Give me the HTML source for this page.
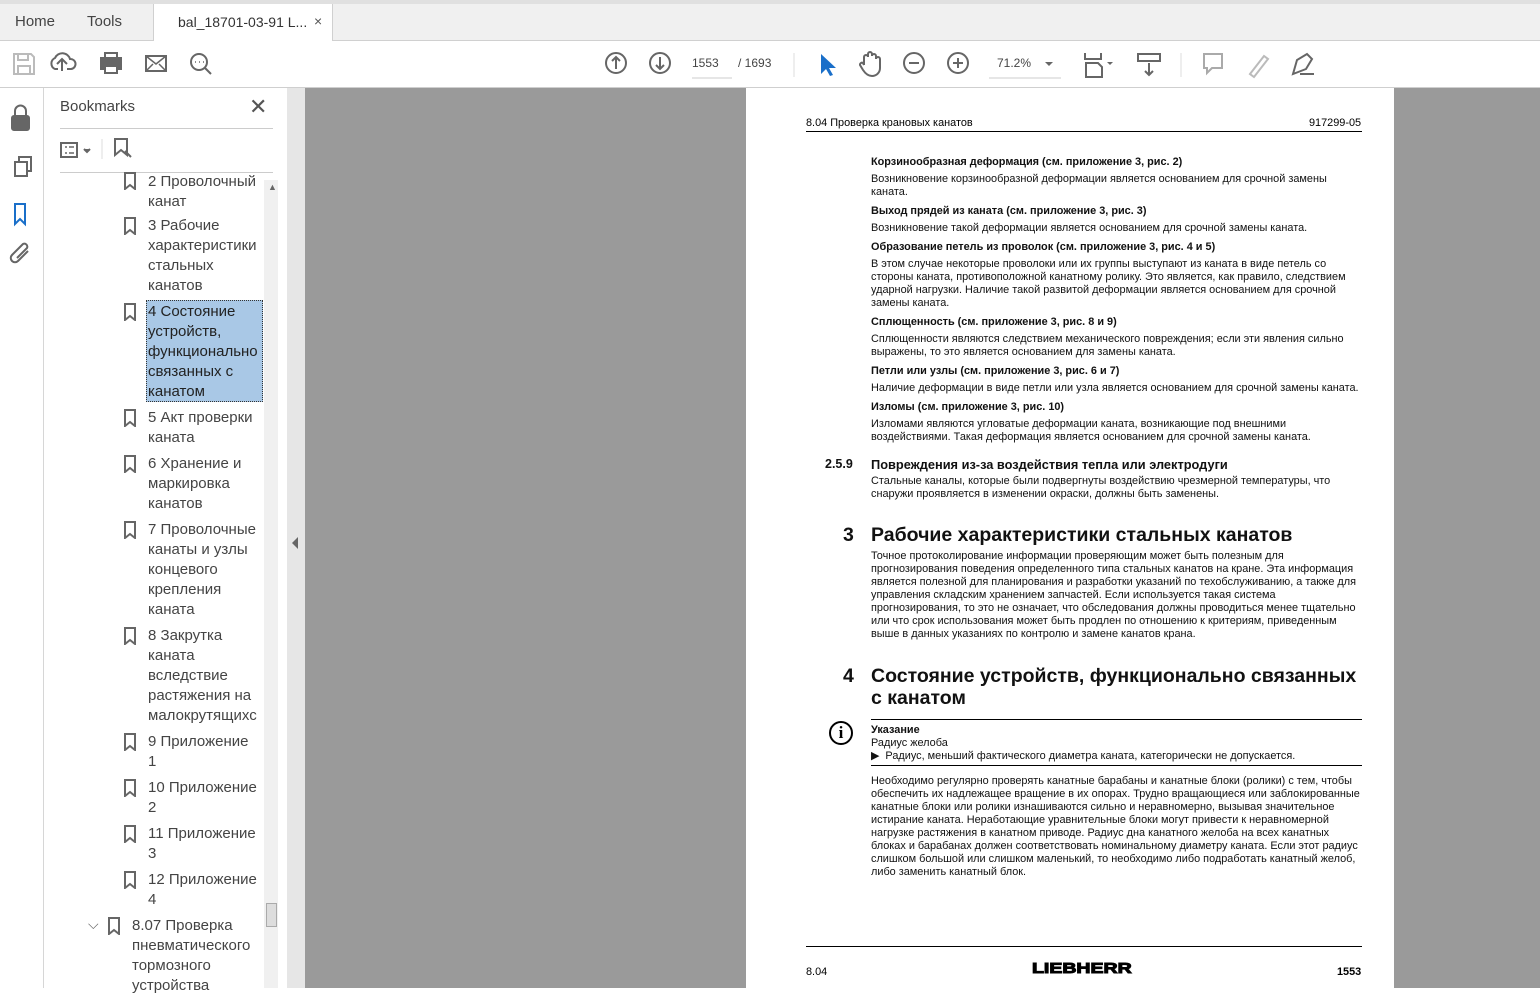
<!DOCTYPE html>
<html><head><meta charset="utf-8"><style>
*{margin:0;padding:0;box-sizing:border-box}
body{width:1540px;height:988px;overflow:hidden;font-family:"Liberation Sans",sans-serif;background:#fff;position:relative}
.a{position:absolute}
.tabs{left:0;top:0;width:1540px;height:41px;background:#f0f0f0;border-top:4px solid #e0e0e0;border-bottom:1px solid #d0d0d0}
.tb{left:0;top:41px;width:1540px;height:47px;background:#fff;border-bottom:1px solid #cfcfcf}
.strip{left:0;top:88px;width:44px;height:900px;background:#fff;border-right:1px solid #d6d6d6}
.bm{left:44px;top:88px;width:243px;height:900px;background:#fff}
.gut{left:287px;top:88px;width:18px;height:900px;background:#e6e6e6}
.doc{left:305px;top:88px;width:1235px;height:900px;background:#9a9a9a}
.page{left:746px;top:88px;width:648px;height:900px;background:#fff}
.it{position:absolute;left:148px;font-size:15px;line-height:20px;color:#444;width:111px}
.bi{position:absolute;left:123px;width:14px;height:18px}
.p{position:absolute;font-size:10.9px;line-height:13px;color:#111;left:871px;width:500px}
.b{font-weight:bold}
.h{font-size:19.5px;line-height:22px}
</style></head><body>
<div class="a tabs"></div>
<div class="a" style="left:15px;top:13px;font-size:15px;color:#444">Home</div>
<div class="a" style="left:87px;top:13px;font-size:15px;color:#444">Tools</div>
<div class="a" style="left:153px;top:4px;width:180px;height:38px;background:#fff;border-left:1px solid #d0d0d0;border-right:1px solid #d0d0d0"></div>
<div class="a" style="left:178px;top:14px;font-size:14px;color:#333">bal_18701-03-91 L...</div>
<div class="a" style="left:314px;top:13px;font-size:14px;color:#555">×</div>
<div class="a tb"></div>
<svg class="a" style="left:0;top:41px" width="1540" height="47" fill="none" stroke="#666" stroke-width="2">
<path d="M14 13h17l3 3v17h-20z M18 13v6h10v-6 M18 33v-8h12v8" stroke="#bbb"/>
<path d="M62 30v-12m-5 5l5-5 5 5M58 28h-3a6 6 0 010-11 8 8 0 0115 1 5 5 0 011 10h-4"/>
<rect x="101" y="17" width="20" height="11" fill="#666"/><rect x="105" y="12" width="12" height="5"/><rect x="105" y="25" width="12" height="7" fill="#fff"/>
<rect x="146" y="15" width="20" height="15"/><path d="M146 15l10 8 10-8M146 30l7-7M166 30l-7-7" stroke-width="1.5"/>
<circle cx="199" cy="21" r="8"/><path d="M205 27l6 6"/><path d="M195 21h1M199 21h1M203 21h1" stroke-width="1.5"/>
<circle cx="616" cy="22" r="10"/><path d="M616 28v-12m-4 4l4-4 4 4"/>
<circle cx="660" cy="22" r="10"/><path d="M660 16v12m-4-4l4 4 4-4"/>
<path d="M692 37h40" stroke="#ccc" stroke-width="1"/>
<path d="M794 12v24M1181 12v24" stroke="#ddd" stroke-width="1"/>
<path d="M821 13l0 20 5-5 4 7 3-1-4-7h7z" fill="#1a6fc9" stroke="none"/>
<path d="M864 24v-8a2 2 0 014 0v-3a2 2 0 014 0v2a2 2 0 014 0v3a2 2 0 014 0v9c0 5-4 8-8 8s-7-3-9-6l-3-5a2 2 0 013-2l1 2"/>
<circle cx="914" cy="22" r="10"/><path d="M909 22h10"/>
<circle cx="958" cy="22" r="10"/><path d="M953 22h10M958 17v10"/>
<path d="M989 37h72" stroke="#ccc" stroke-width="1"/>
<path d="M1045 21l4 4 4-4" fill="#666" stroke="none"/>
<path d="M1085 12v6h16v-6M1086 22h12l4 4v10h-16z"/><path d="M1107 21l3 3 3-3" fill="#666" stroke="none"/>
<rect x="1138" y="13" width="22" height="7"/><path d="M1149 22v12m-4-4l4 4 4-4"/>
<path d="M1204 13h18v14h-10l-5 5v-5h-3z" stroke="#aaa"/>
<path d="M1250 33l14-18 4 3-14 18z" stroke="#bbb"/>
<path d="M1293 33l4-14 10-6 5 5-6 10z M1300 33h14"/>
</svg>
<div class="a" style="left:692px;top:56px;font-size:12px;color:#444">1553</div>
<div class="a" style="left:738px;top:56px;font-size:12px;color:#444">/ 1693</div>
<div class="a" style="left:997px;top:56px;font-size:12px;color:#444">71.2%</div>
<div class="a strip"></div>
<svg class="a" style="left:0;top:88px" width="44" height="200" fill="none" stroke="#666" stroke-width="2">
<rect x="12" y="28" width="17" height="14" rx="2" fill="#666"/><path d="M15 28v-5a5 5 0 0111 0v5"/>
<path d="M15 74v14h12v-14zM19 74v-5h12v14h-4"/>
<path d="M15 116v20l5-5 5 5v-20z" stroke="#1a6fc9"/>
<path d="M28 163l-10 10a4 4 0 01-6-6l11-11a3 3 0 014 4l-10 10"/>
</svg>
<div class="a bm"></div>
<div class="a" style="left:60px;top:98px;font-size:15px;color:#444">Bookmarks</div>
<div class="a" style="left:249px;top:94px;font-size:22px;color:#555">✕</div>
<div class="a" style="left:60px;top:128px;width:213px;height:1px;background:#ccc"></div>
<div class="a" style="left:60px;top:172px;width:213px;height:1px;background:#ccc"></div>
<svg class="a" style="left:55px;top:135px" width="90" height="30" fill="none" stroke="#666" stroke-width="2"><rect x="6" y="8" width="16" height="14"/><path d="M10 12h2M14 12h5M10 18h2M14 18h5" stroke-width="1.5"/><path d="M29 14l3 3 3-3" fill="#666"/><path d="M47 4v20" stroke="#ddd" stroke-width="1"/><path d="M60 4h12v16l-6-5-6 5z"/><path d="M70 16l6 6" /></svg>
<div class="a" style="left:146px;top:300px;width:117px;height:102px;background:#a9c8e6;border:1px dotted #333"></div>
<svg width="0" height="0" style="position:absolute"><defs><symbol id="bk" viewBox="0 0 14 18"><path d="M2 1h10v16l-5-4-5 4z" fill="none" stroke="#666" stroke-width="2"/></symbol></defs></svg>
<svg class="bi" style="top:172px"><use href="#bk"/></svg><div class="it" style="top:172px">2 Проволочный<br>канат</div>
<svg class="bi" style="top:217px"><use href="#bk"/></svg><div class="it" style="top:216px">3 Рабочие характеристики стальных канатов</div>
<svg class="bi" style="top:303px"><use href="#bk"/></svg><div class="it" style="top:302px;color:#222">4 Состояние устройств, функционально связанных с канатом</div>
<svg class="bi" style="top:409px"><use href="#bk"/></svg><div class="it" style="top:408px">5 Акт проверки каната</div>
<svg class="bi" style="top:455px"><use href="#bk"/></svg><div class="it" style="top:454px">6 Хранение и маркировка канатов</div>
<svg class="bi" style="top:521px"><use href="#bk"/></svg><div class="it" style="top:520px">7 Проволочные канаты и узлы концевого крепления каната</div>
<svg class="bi" style="top:627px"><use href="#bk"/></svg><div class="it" style="top:626px">8 Закрутка каната вследствие растяжения на малокрутящихс</div>
<svg class="bi" style="top:733px"><use href="#bk"/></svg><div class="it" style="top:732px">9 Приложение<br>1</div>
<svg class="bi" style="top:779px"><use href="#bk"/></svg><div class="it" style="top:778px">10 Приложение 2</div>
<svg class="bi" style="top:825px"><use href="#bk"/></svg><div class="it" style="top:824px">11 Приложение 3</div>
<svg class="bi" style="top:871px"><use href="#bk"/></svg><div class="it" style="top:870px">12 Приложение 4</div>
<div class="a" style="left:88px;top:916px;font-size:14px;color:#666">⌵</div>
<svg class="bi" style="left:107px;top:917px"><use href="#bk"/></svg><div class="it" style="left:132px;top:916px;width:130px">8.07 Проверка пневматического тормозного устройства</div>
<div class="a" style="left:264px;top:180px;width:14px;height:808px;background:#f0f0f0"></div>
<div class="a" style="left:266px;top:903px;width:11px;height:24px;background:#ddd;border:1px solid #aaa"></div>
<div class="a" style="left:268px;top:182px;font-size:9px;color:#666">▲</div>
<div class="a gut"></div>
<div class="a" style="left:292px;top:537px;width:0;height:0;border-top:6px solid transparent;border-bottom:6px solid transparent;border-right:6px solid #666"></div>
<div class="a doc"></div>
<div class="a page"></div>
<div class="a" style="left:806px;top:117px;font-size:10.9px">8.04 Проверка крановых канатов</div>
<div class="a" style="left:1309px;top:117px;font-size:10.9px">917299-05</div>
<div class="a" style="left:806px;top:131px;width:556px;height:1px;background:#000"></div>
<div class="p b" style="top:156px">Корзинообразная деформация (см. приложение 3, рис. 2)</div>
<div class="p" style="top:173px">Возникновение корзинообразной деформации является основанием для срочной замены<br>каната.</div>
<div class="p b" style="top:205px">Выход прядей из каната (см. приложение 3, рис. 3)</div>
<div class="p" style="top:222px">Возникновение такой деформации является основанием для срочной замены каната.</div>
<div class="p b" style="top:241px">Образование петель из проволок (см. приложение 3, рис. 4 и 5)</div>
<div class="p" style="top:258px">В этом случае некоторые проволоки или их группы выступают из каната в виде петель со<br>стороны каната, противоположной канатному ролику. Это является, как правило, следствием<br>ударной нагрузки. Наличие такой развитой деформации является основанием для срочной<br>замены каната.</div>
<div class="p b" style="top:316px">Сплющенность (см. приложение 3, рис. 8 и 9)</div>
<div class="p" style="top:333px">Сплющенности являются следствием механического повреждения; если эти явления сильно<br>выражены, то это является основанием для замены каната.</div>
<div class="p b" style="top:365px">Петли или узлы (см. приложение 3, рис. 6 и 7)</div>
<div class="p" style="top:382px">Наличие деформации в виде петли или узла является основанием для срочной замены каната.</div>
<div class="p b" style="top:401px">Изломы (см. приложение 3, рис. 10)</div>
<div class="p" style="top:418px">Изломами являются угловатые деформации каната, возникающие под внешними<br>воздействиями. Такая деформация является основанием для срочной замены каната.</div>
<div class="p b" style="left:825px;top:458px;font-size:12.5px">2.5.9</div>
<div class="p b" style="top:458px;font-size:12.8px">Повреждения из-за воздействия тепла или электродуги</div>
<div class="p" style="top:475px">Стальные каналы, которые были подвергнуты воздействию чрезмерной температуры, что<br>снаружи проявляется в изменении окраски, должны быть заменены.</div>
<div class="p b h" style="left:843px;top:524px">3</div>
<div class="p b h" style="top:524px">Рабочие характеристики стальных канатов</div>
<div class="p" style="top:550px">Точное протоколирование информации проверяющим может быть полезным для<br>прогнозирования поведения определенного типа стальных канатов на кране. Эта информация<br>является полезной для планирования и разработки указаний по техобслуживанию, а также для<br>управления складским хранением запчастей. Если используется такая система<br>прогнозирования, то это не означает, что обследования должны проводиться менее тщательно<br>или что срок использования может быть продлен по отношению к критериям, приведенным<br>выше в данных указаниях по контролю и замене канатов крана.</div>
<div class="p b h" style="left:843px;top:665px">4</div>
<div class="p b h" style="top:665px">Состояние устройств, функционально связанных<br>с канатом</div>
<div class="a" style="left:871px;top:719px;width:491px;height:1px;background:#000"></div>
<div class="a" style="left:829px;top:721px;width:24px;height:24px;border:2px solid #000;border-radius:50%;font:bold 17px 'Liberation Serif',serif;text-align:center;line-height:20px">i</div>
<div class="p b" style="top:724px">Указание</div>
<div class="p" style="top:737px">Радиус желоба</div>
<div class="p" style="top:750px">▶&nbsp;&nbsp;Радиус, меньший фактического диаметра каната, категорически не допускается.</div>
<div class="a" style="left:871px;top:765px;width:491px;height:1px;background:#000"></div>
<div class="p" style="top:775px">Необходимо регулярно проверять канатные барабаны и канатные блоки (ролики) с тем, чтобы<br>обеспечить их надлежащее вращение в их опорах. Трудно вращающиеся или заблокированные<br>канатные блоки или ролики изнашиваются сильно и неравномерно, вызывая значительное<br>истирание каната. Неработающие уравнительные блоки могут привести к неравномерной<br>нагрузке растяжения в канатном приводе. Радиус дна канатного желоба на всех канатных<br>блоках и барабанах должен соответствовать номинальному диаметру каната. Если этот радиус<br>слишком большой или слишком маленький, то необходимо либо подработать канатный желоб,<br>либо заменить канатный блок.</div>
<div class="a" style="left:806px;top:946px;width:556px;height:1px;background:#000"></div>
<div class="a" style="left:806px;top:966px;font-size:10.9px">8.04</div>
<div class="a" style="left:1032px;top:960px;font:bold 15px 'Liberation Sans',sans-serif;-webkit-text-stroke:1px #000;transform:scale(1.3,1);transform-origin:left top">LIEBHERR</div>
<div class="a" style="left:1337px;top:966px;font-size:10.9px;font-weight:bold">1553</div>
</body></html>
